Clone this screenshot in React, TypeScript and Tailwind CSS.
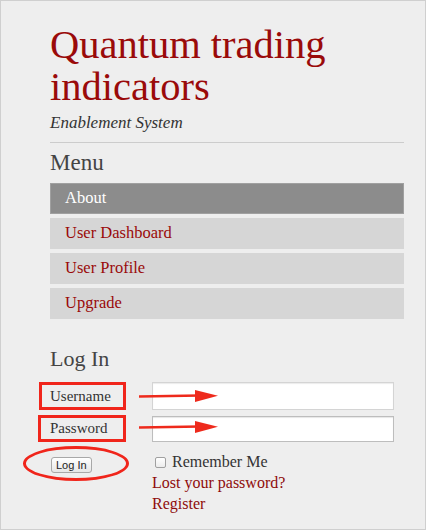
import React from "react";

const serif = { fontFamily: '"Liberation Serif", "DejaVu Serif", serif' };
const sans = { fontFamily: '"Liberation Sans", Arial, sans-serif' };

function Arrow() {
  return (
    <svg width="82" height="14" viewBox="0 0 82 14" className="block">
      <path d="M1 7.5 L62 6.5" stroke="#ee2a1c" strokeWidth="2.5" fill="none" />
      <path d="M57 1 L80 6.8 L57 13 Z" fill="#ee2a1c" />
    </svg>
  );
}

export default function App() {
  return (
    <div className="w-[426px] h-[530px] bg-[#eeeeee] border border-[#cfcfcf] overflow-hidden" style={serif}>
      <div className="pl-[49px] pr-[21px] pt-[23px]">
        <h1 className="text-[40.5px] leading-[42px] text-[#9a0a0a]">Quantum trading indicators</h1>
        <div className="italic text-[17px] leading-[20px] text-[#333] mt-[5px]">Enablement System</div>
        <div className="h-px bg-[#cccccc] mt-[9px]" />
        <div className="text-[23px] leading-[26px] text-[#444] mt-[7px]">Menu</div>
        <div className="mt-[7px] flex flex-col gap-[4px]">
          <div className="h-[31px] bg-[#8c8c8c] border border-[#a0a0a0] pl-[14px] flex items-center text-white text-[16.5px]">About</div>
          <div className="h-[31px] bg-[#d6d6d6] pl-[15px] flex items-center text-[#9a0a0a] text-[16.5px]">User Dashboard</div>
          <div className="h-[31px] bg-[#d6d6d6] pl-[15px] flex items-center text-[#9a0a0a] text-[16.5px]">User Profile</div>
          <div className="h-[31px] bg-[#d6d6d6] pl-[15px] flex items-center text-[#9a0a0a] text-[16.5px]">Upgrade</div>
        </div>
        <div className="text-[22px] leading-[26px] text-[#444] mt-[27px]">Log In</div>
        <div className="mt-[10px] flex flex-col gap-[5px]">
          <div className="flex items-center h-[28px] relative">
            <div className="w-[102px] h-[28px] flex items-center text-[15px] text-[#333]">Username</div>
            <input className="w-[242px] h-[28px] bg-white border border-[#d4d4d4] shadow-[inset_0_1px_1px_rgba(0,0,0,0.08)] outline-none" />
            <div className="absolute left-[-11px] top-0 w-[87px] h-[28px] border-[3px] border-[#f0251b]" />
            <div className="absolute left-[88px] top-[7px]"><Arrow /></div>
          </div>
          <div className="flex items-center h-[27px] relative">
            <div className="w-[102px] h-[27px] flex items-center text-[15px] text-[#333]">Password</div>
            <input type="password" className="w-[242px] h-[26px] bg-white border border-[#bdbdbd] shadow-[inset_0_1px_1px_rgba(0,0,0,0.1)] outline-none" />
            <div className="absolute left-[-12px] top-0 w-[88px] h-[27px] border-[3px] border-[#f0251b]" />
            <div className="absolute left-[88px] top-[5px]"><Arrow /></div>
          </div>
        </div>
        <div className="flex mt-[10px]">
          <div className="w-[102px] relative">
            <button className="mt-[1px] ml-[1px] h-[16px] px-[4px] rounded-[3px] border border-[#a8a8a8] bg-gradient-to-b from-white to-[#e6e6e6] text-[11px] leading-[14px] text-[#222]" style={sans}>Log In</button>
            <div className="absolute left-[-27px] top-[-6px] w-[106px] h-[35px] rounded-[50%] border-[3px] border-[#f0251b]" />
          </div>
          <div className="flex flex-col">
            <label className="flex items-center h-[20px] text-[16px] text-[#333]">
              <span className="ml-[3px] w-[11px] h-[11px] rounded-[2px] border border-[#a0a0a0] bg-gradient-to-b from-white to-[#ececec]" />
              <span className="ml-[6px]">Remember Me</span>
            </label>
            <div className="text-[16px] leading-[21px] text-[#8f0b0b]">Lost your password?</div>
            <div className="text-[16px] leading-[21px] text-[#8f0b0b]">Register</div>
          </div>
        </div>
      </div>
    </div>
  );
}
